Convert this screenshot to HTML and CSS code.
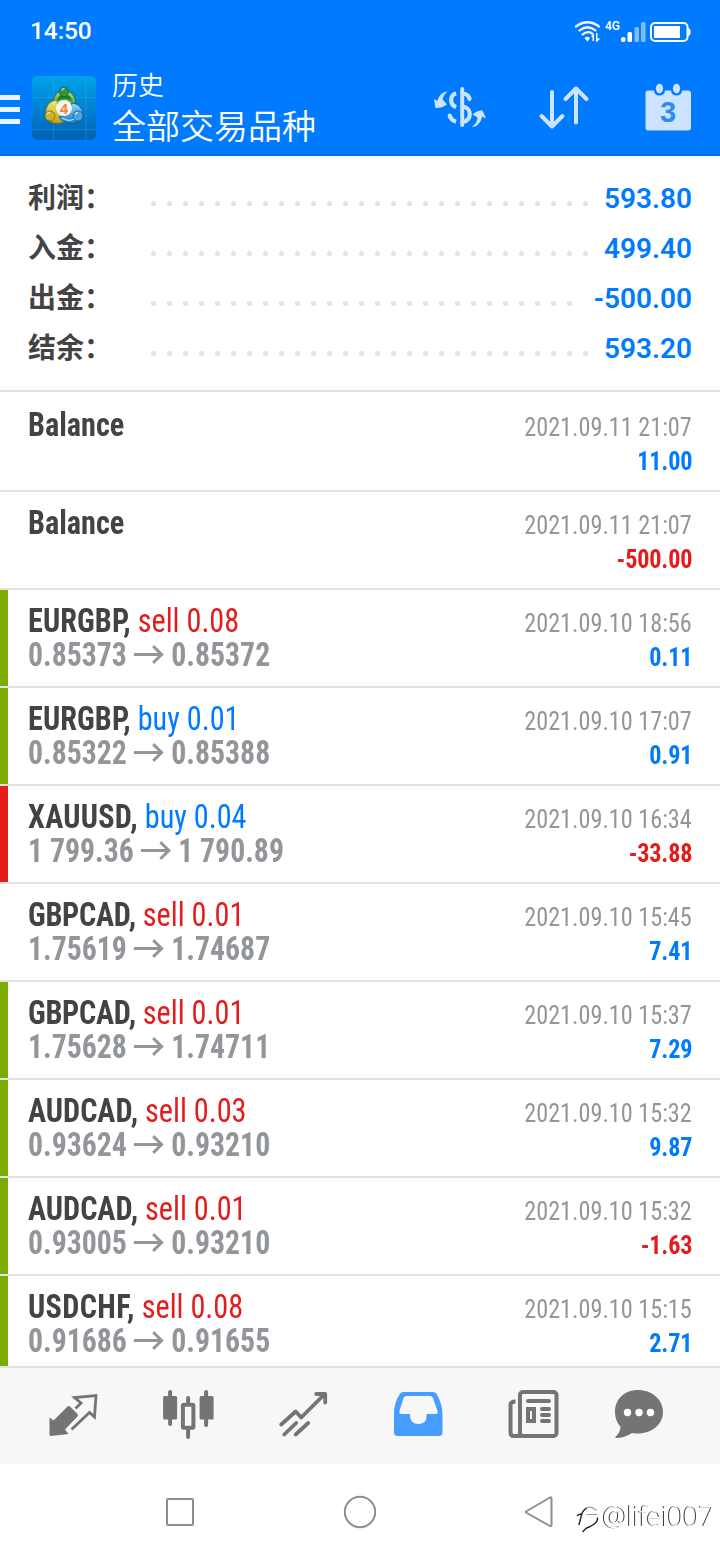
FILE: index.html
```
<!DOCTYPE html>
<html lang="zh-CN">
<head>
<meta charset="utf-8">
<title>历史</title>
<link rel="stylesheet" href="styles.css">
</head>
<body>
<div class="screen">
  <header class="header">
    <div class="status">
      <span class="clock">14:50</span>
      <svg class="status-icons" width="120" height="30" viewBox="0 0 120 30">
        <g fill="none" stroke="#fff" stroke-width="2.2" stroke-linecap="round">
          <path d="M6 11.500Q17.500 3 29 11.500"/>
          <path d="M9.500 15.500Q17.500 9 25.500 15.500"/>
          <path d="M12.500 19.500Q17.500 15.500 22 18.500"/>
        </g>
        <path fill="#fff" d="M14.500 23Q17.500 20.500 20 23L17.500 26.500ZM22.500 26V22H21L24 18V26ZM26 18V27.500L30.500 23.500H27.500V18Z"/>
        <text class="net" x="35" y="15">4G</text>
        <g fill="#fff">
          <rect x="51" y="22" width="4.500" height="5" rx="2"/>
          <rect x="57.500" y="17" width="4.500" height="10" rx="1.500"/>
          <rect x="64.500" y="12" width="4.500" height="15" rx="1.500" opacity=".5"/>
          <rect x="71" y="7" width="4.500" height="20" rx="1.500" opacity=".5"/>
          <rect x="84" y="11" width="26" height="12"/>
          <path d="M118 13q2.500 0 2.500 4t-2.500 4z"/>
        </g>
        <rect x="81" y="8" width="36.500" height="18" rx="4" fill="none" stroke="#fff" stroke-width="2"/>
      </svg>
    </div>
    <div class="bar">
      <div class="menu"><i></i><i></i><i></i></div>
      <svg class="logo" width="64" height="64" viewBox="0 0 64 64">
        <defs>
          <linearGradient id="bg" x1="0" y1="0" x2="0" y2="1"><stop offset="0" stop-color="#00a2e8"/><stop offset=".5" stop-color="#0083d2"/><stop offset="1" stop-color="#0060b4"/></linearGradient>
          <linearGradient id="gr" x1="0" y1="0" x2="0" y2="1"><stop offset="0" stop-color="#b2dd8c"/><stop offset="1" stop-color="#2e8b2d"/></linearGradient>
          <linearGradient id="ye" x1="0" y1="0" x2="0" y2="1"><stop offset="0" stop-color="#f3e976"/><stop offset="1" stop-color="#bda112"/></linearGradient>
          <linearGradient id="bl" x1="0" y1="0" x2="0" y2="1"><stop offset="0" stop-color="#8fd5f7"/><stop offset="1" stop-color="#1579c6"/></linearGradient>
        </defs>
        <rect width="64" height="64" rx="5" fill="url(#bg)"/>
        <path d="M21.500 0V64M54 0V64M0 21.500H64M0 53.500H64" stroke="#55bff0" stroke-opacity=".25" fill="none"/>
        <g stroke-width=".8">
          <path d="M21 29C21 19 26 14.500 32.500 14.500S44 20 44 29L38 33H27Z" fill="url(#gr)" stroke="#185f25"/>
          <path d="M25 25Q26 18 32 18.500Q39 18 40 25Q33 21 25 25" fill="#247c2c" stroke="none"/>
          <path d="M25 24C14 25 12 36 15 43Q21 50 33 46L36 40 26 34Z" fill="url(#ye)" stroke="#746b10"/>
          <path d="M40 27C50 28 53 37 49 44C42 50 31 48 27 41L37 38Z" fill="url(#bl)" stroke="#075591"/>
          <path d="M30 42Q37 46 42 43L47 36" fill="none" stroke="#b9e6fa" stroke-width="1.300"/>
          <circle cx="32" cy="16" r="4.600" fill="#37943b" stroke="#17672a"/>
          <circle cx="18" cy="40" r="5" fill="#cdb426" stroke="#786d17"/>
          <circle cx="46" cy="40" r="5" fill="#4ba6dc" stroke="#12609c"/>
        </g>
        <path d="M29.500 14.500q1-2 3-2M15 38.500q1-2 3-2M43 38.500q1-2 3-2" stroke="#fff" stroke-opacity=".6" stroke-width="1.400" fill="none"/>
        <circle cx="32" cy="32" r="8" fill="#f3f4f4"/>
        <text class="four" x="27.800" y="37.500">4</text>
      </svg>
      <div class="titles">
        <div class="subtitle">历史</div>
        <div class="title">全部交易品种</div>
      </div>
      <svg class="actions" width="270" height="60" viewBox="0 0 270 60">
        <g fill="#cce4ff">
          <path d="M17.500 11.500C14.500 14 13 17 12.600 19.500L17 24.500Q11 28.500 5.500 28L4 19L7.500 21C8.500 16 12 12 17.500 11.500Z"/>
          <path d="M42 47C46 43.500 47 41 47.500 37.500L42.500 34.500Q47.500 30 52.500 30.500L56 38.500L52 36.500C51.500 42 47 47 42 47Z"/>
          <rect x="30.200" y="7" width="4" height="40" rx="2"/>
        </g>
        <g fill="none" stroke="#cce4ff" stroke-width="4.200" stroke-linecap="round">
          <path d="M26.200 13.500C19.500 15 19.500 25 26.200 27M33 13.500Q39 14.500 39.500 19M33 26.500C42 28 42 40.500 33 42M19.700 36Q21.500 40.500 26.200 41.500" stroke-linecap="butt"/>
          <path d="M39.500 19v.1M19.700 35.500v.1"/>
        </g>
        <g fill="none" stroke="#cce4ff" stroke-width="4" stroke-linecap="round" stroke-linejoin="round">
          <path d="M122 12V46M111.500 36L122 46.500L132.500 36M146 42.500V9M135.500 19L146 8.500L156.500 19"/>
        </g>
        <path fill="#cce4ff" d="M218 10.500H224Q224.500 15.500 229.500 15.500T235 10.500H241Q241.500 15.500 246.500 15.500T252 10.500H258Q261 10.500 261 13.500V47.500Q261 50.500 258 50.500H218Q215.500 50.500 215.500 47.500V13.500Q215.500 10.500 218 10.500Z"/>
        <ellipse cx="229.500" cy="8.500" rx="3.600" ry="4.800" fill="#cce4ff"/>
        <ellipse cx="246.500" cy="8.500" rx="3.600" ry="4.800" fill="#cce4ff"/>
        <text class="day" x="230" y="42">3</text>
      </svg>
    </div>
  </header>

  <section class="summary">
    <div class="sum"><b>利润：</b><i class="dots"></i><span>593.80</span></div>
    <div class="sum"><b>入金：</b><i class="dots"></i><span>499.40</span></div>
    <div class="sum"><b>出金：</b><i class="dots short"></i><span>-500.00</span></div>
    <div class="sum"><b>结余：</b><i class="dots"></i><span>593.20</span></div>
  </section>

  <main class="list">
    <div class="row first"><div class="left"><p><b>Balance</b></p></div><div class="right"><time>2021.09.11 21:07</time><strong>11.00</strong></div></div>
    <div class="row"><div class="left"><p><b>Balance</b></p></div><div class="right"><time>2021.09.11 21:07</time><strong class="neg">-500.00</strong></div></div>
    <div class="row green"><div class="left"><p><b class="eurgbp">EURGBP,</b> <span class="neg">sell 0.08</span></p><p class="price">0.85373 <svg class="arrow" viewBox="0 0 32 20"><path d="M0 10H29M20.500 2L29.500 10L20.500 18"/></svg> 0.85372</p></div><div class="right"><time>2021.09.10 18:56</time><strong>0.11</strong></div></div>
    <div class="row green"><div class="left"><p><b class="eurgbp">EURGBP,</b> <span class="pos">buy 0.01</span></p><p class="price">0.85322 <svg class="arrow" viewBox="0 0 32 20"><path d="M0 10H29M20.500 2L29.500 10L20.500 18"/></svg> 0.85388</p></div><div class="right"><time>2021.09.10 17:07</time><strong>0.91</strong></div></div>
    <div class="row red"><div class="left"><p><b class="xauusd">XAUUSD,</b> <span class="pos">buy 0.04</span></p><p class="price">1 799.36 <svg class="arrow" viewBox="0 0 32 20"><path d="M0 10H29M20.500 2L29.500 10L20.500 18"/></svg> 1 790.89</p></div><div class="right"><time>2021.09.10 16:34</time><strong class="neg">-33.88</strong></div></div>
    <div class="row"><div class="left"><p><b class="gbpcad">GBPCAD,</b> <span class="neg">sell 0.01</span></p><p class="price">1.75619 <svg class="arrow" viewBox="0 0 32 20"><path d="M0 10H29M20.500 2L29.500 10L20.500 18"/></svg> 1.74687</p></div><div class="right"><time>2021.09.10 15:45</time><strong>7.41</strong></div></div>
    <div class="row green"><div class="left"><p><b class="gbpcad">GBPCAD,</b> <span class="neg">sell 0.01</span></p><p class="price">1.75628 <svg class="arrow" viewBox="0 0 32 20"><path d="M0 10H29M20.500 2L29.500 10L20.500 18"/></svg> 1.74711</p></div><div class="right"><time>2021.09.10 15:37</time><strong>7.29</strong></div></div>
    <div class="row green"><div class="left"><p><b>AUDCAD,</b> <span class="neg">sell 0.03</span></p><p class="price">0.93624 <svg class="arrow" viewBox="0 0 32 20"><path d="M0 10H29M20.500 2L29.500 10L20.500 18"/></svg> 0.93210</p></div><div class="right"><time>2021.09.10 15:32</time><strong>9.87</strong></div></div>
    <div class="row green"><div class="left"><p><b>AUDCAD,</b> <span class="neg">sell 0.01</span></p><p class="price">0.93005 <svg class="arrow" viewBox="0 0 32 20"><path d="M0 10H29M20.500 2L29.500 10L20.500 18"/></svg> 0.93210</p></div><div class="right"><time>2021.09.10 15:32</time><strong class="neg">-1.63</strong></div></div>
    <div class="row green"><div class="left"><p><b class="usdchf">USDCHF,</b> <span class="neg">sell 0.08</span></p><p class="price">0.91686 <svg class="arrow" viewBox="0 0 32 20"><path d="M0 10H29M20.500 2L29.500 10L20.500 18"/></svg> 0.91655</p></div><div class="right"><time>2021.09.10 15:15</time><strong>2.71</strong></div></div>
  </main>

  <nav class="tabs">
    <svg viewBox="0 0 60 60"><path fill="#747474" d="M25.500 18.500Q27 17.500 28 18.500L35.500 26Q36.500 27 35.500 28.500L23 41.500L26.500 46L9 48Q7.500 48 7.500 46.500V29.500L11.500 32.500Z"/><path fill="none" stroke="#747474" stroke-width="2.800" d="M33.500 20.500L39 15L32.500 9.500L54 7.500L52.500 29L47.500 24.500L29.500 41.500"/></svg>
    <svg viewBox="-2.600 0 60 60"><g fill="#747474"><rect x="5.500" y="8" width="14" height="23.500" rx="1.500"/><rect x="10.500" y="2" width="4" height="36" rx="2"/><rect x="42" y="8" width="14" height="23.500" rx="1.500"/><rect x="46.500" y="2" width="4" height="37" rx="2"/><rect x="28.500" y="8" width="4" height="8" rx="2"/><rect x="28.500" y="40" width="4" height="11" rx="2"/></g><rect x="25.300" y="16.800" width="10.500" height="23" rx="1" fill="none" stroke="#747474" stroke-width="4"/></svg>
    <svg viewBox="-3.700 0 60 60"><path fill="none" stroke="#747474" stroke-width="3.800" stroke-linecap="round" stroke-linejoin="round" d="M8.500 36.500L23 23.500L28.500 29.500L51 7M43.500 6H52.500V14.500M11.500 46.500L23.500 35M23 46.500L35.500 35"/></svg>
    <svg viewBox="-6 0 60 60"><path fill="#469dff" fill-rule="evenodd" d="M15 4H45Q48 4 49 6.500Q54.500 17 54.500 26V44Q54.500 48 51 48H9.500Q6 48 6 44V26Q6 15 11.500 6.500Q12.500 4 15 4ZM18.500 8Q16.500 8 15.500 10L11.500 23Q11 26 13 26H22V28Q22.500 36 30.500 36T38.500 28V26H48Q50 26 49.500 23L45 10Q44 8 42 8Z"/></svg>
    <svg viewBox="-5.500 0 60 60"><g fill="none" stroke="#747474" stroke-width="4"><rect x="18.500" y="4" width="36.500" height="44" rx="3"/><path d="M14 13.500Q9 13.500 9 17V44Q9 48 12 48H20"/><rect x="26.500" y="21" width="6" height="12"/><path stroke-linecap="round" d="M26.500 13H47.500M40.500 21H47.500M40.500 27H47.500M40.500 33H47.500"/></g></svg>
    <svg viewBox="0.500 0 60 60"><path fill="#747474" d="M29.500 2C43 2 54.500 11 54.500 24C54.500 38 40 48 23.500 45Q16 50 7.500 50Q6 50 7 49Q12 44 12 38.500Q6.500 33 6.500 24C6.500 11 16 2 29.500 2Z"/><g fill="#fff"><circle cx="19" cy="24.500" r="3.700"/><circle cx="30.500" cy="24.500" r="3.700"/><circle cx="42" cy="24.500" r="3.700"/></g></svg>
  </nav>

  <footer class="system">
    <svg width="720" height="96" viewBox="0 0 720 96">
      <g fill="none" stroke="#8e8e8e" stroke-width="2">
        <rect x="167" y="35" width="26" height="26" rx="1"/>
        <circle cx="360" cy="48" r="15.200"/>
        <path stroke-linejoin="round" d="M526 47.500L550 33.500Q551.500 33 551.500 34.500V61Q551.500 62.500 550 62L526 48.500Z"/>
      </g>
      <g fill="none" stroke-linecap="round">
        <path stroke="#999" stroke-width="1.200" d="M585 45Q590 41 596 46M587 50.500H597"/>
        <path stroke="#222" stroke-width="1.400" d="M577.500 51.500Q579 50 582 50M579 60.500L581 53Q582 47 586 44.500M583 67.500Q586 63.500 589 63Q598 59 597.500 54"/>
      </g>
      <text class="mark" x="602.500" y="62" textLength="112">@lifei007</text>
    </svg>
  </footer>
</div>
</body>
</html>
```
FILE: styles.css
```
* { box-sizing: border-box; }
body { margin: 0; background: #fff; font-family: Roboto, "Noto Sans CJK SC", sans-serif; }
.screen { width: 720px; height: 1560px; display: flex; flex-direction: column; overflow: hidden; }
p { margin: 0; }
svg { display: block; flex: none; }

.header { height: 156px; background: #007aff; border-bottom: 2px solid #006fe8; color: #fff; }
.status { height: 64px; padding: 15px 30px 0 30px; display: flex; justify-content: space-between; }
.clock { font-size: 24.500px; line-height: 31px; font-weight: 500; letter-spacing: -.1px; }
.status-icons { overflow: visible; }
.net { font: 500 12px Roboto, sans-serif; fill: #fff; }
.bar { height: 90px; display: flex; }
.menu { width: 20px; height: 29px; margin: 31px 12px 0 0; display: flex; flex-direction: column; justify-content: space-between; }
.menu i { height: 5px; background: #eaf4ff; }
.logo { margin-top: 12px; }
.four { font: bold 15px "Noto Sans", sans-serif; fill: #f58a32; }
.titles { width: 334px; padding-left: 16px; font-family: "Noto Sans CJK SC", sans-serif; font-weight: 350; white-space: nowrap; }
.subtitle { font-size: 26px; line-height: 36px; padding-top: 2px; }
.title { font-size: 34px; line-height: 46px; }
.actions { margin-top: 16px; }
.day { font: bold 29px "Liberation Sans", sans-serif; fill: #2b8cf5; }

.summary { height: 236px; padding: 17px 28px 0; border-bottom: 2px solid #e3e3e3; flex: none; }
.sum { height: 50px; display: flex; align-items: flex-start; line-height: 52px; }
.sum b { width: 117px; font: 700 28px/46px "Noto Sans CJK SC", sans-serif; color: #434343; white-space: nowrap; }
.dots { flex: 1; height: 7px; margin: 27px 10px 0 0; background: radial-gradient(circle at 8.500px 3.500px, #e4e4e4 2.300px, transparent 3px) 0 0 / 16px 7px repeat-x; }
.dots.short { margin-right: 18px; }
.sum span { font-size: 28px; font-weight: 600; color: #007aff; }

.list { flex: 1; min-height: 0; overflow: hidden; font-family: "Roboto Condensed", Roboto, sans-serif; font-stretch: 75%; }
.row { height: 98px; border-bottom: 2px solid #e3e3e3; padding: 14px 28px 0 20px; display: flex; justify-content: space-between; position: relative; white-space: nowrap; }
.row.first { height: 100px; padding-top: 16px; }
.left { padding-left: 8px; font-size: 33px; line-height: 34px; color: #434343; }
.left p { transform: scaleX(.916); transform-origin: 0 0; }
.left b { font-weight: 700; }
.left .eurgbp { letter-spacing: .1px; }
.left .xauusd { letter-spacing: .25px; }
.left .gbpcad { letter-spacing: -.3px; }
.left .usdchf { letter-spacing: .4px; }
.left .price { font-weight: 700; color: #929599; transform: scaleX(.902); }
.arrow { display: inline-block; width: 34px; height: 21px; fill: none; stroke: #929599; stroke-width: 3; position: relative; top: -1px; }
.right { text-align: right; font-size: 26px; line-height: 34px; padding-top: 2px; transform: scaleX(.932); transform-origin: 100% 0; }
.right time, .right strong { display: block; }
.right time { color: #929599; }
.right strong { color: #007aff; letter-spacing: -.2px; margin-right: -.6px; }
.pos { color: #007aff; }
.neg, .right .neg { color: #e31c1c; }
.green::before, .red::before { content: ""; position: absolute; left: 0; top: 0; width: 8px; height: 96px; background: #7aad00; }
.red::before { background: #e31c1c; }

.tabs { height: 98px; flex: none; background: #f7f7f7; border-top: 2px solid #e3e3e3; display: flex; justify-content: space-between; padding: 20px 51px 0 42px; }
.tabs svg { width: 60px; height: 60px; overflow: visible; }
.system { height: 96px; flex: none; }
.mark { font: 300 28px "Open Sans", sans-serif; fill: #fff; filter: drop-shadow(-1px 0 0 #333); }
```
